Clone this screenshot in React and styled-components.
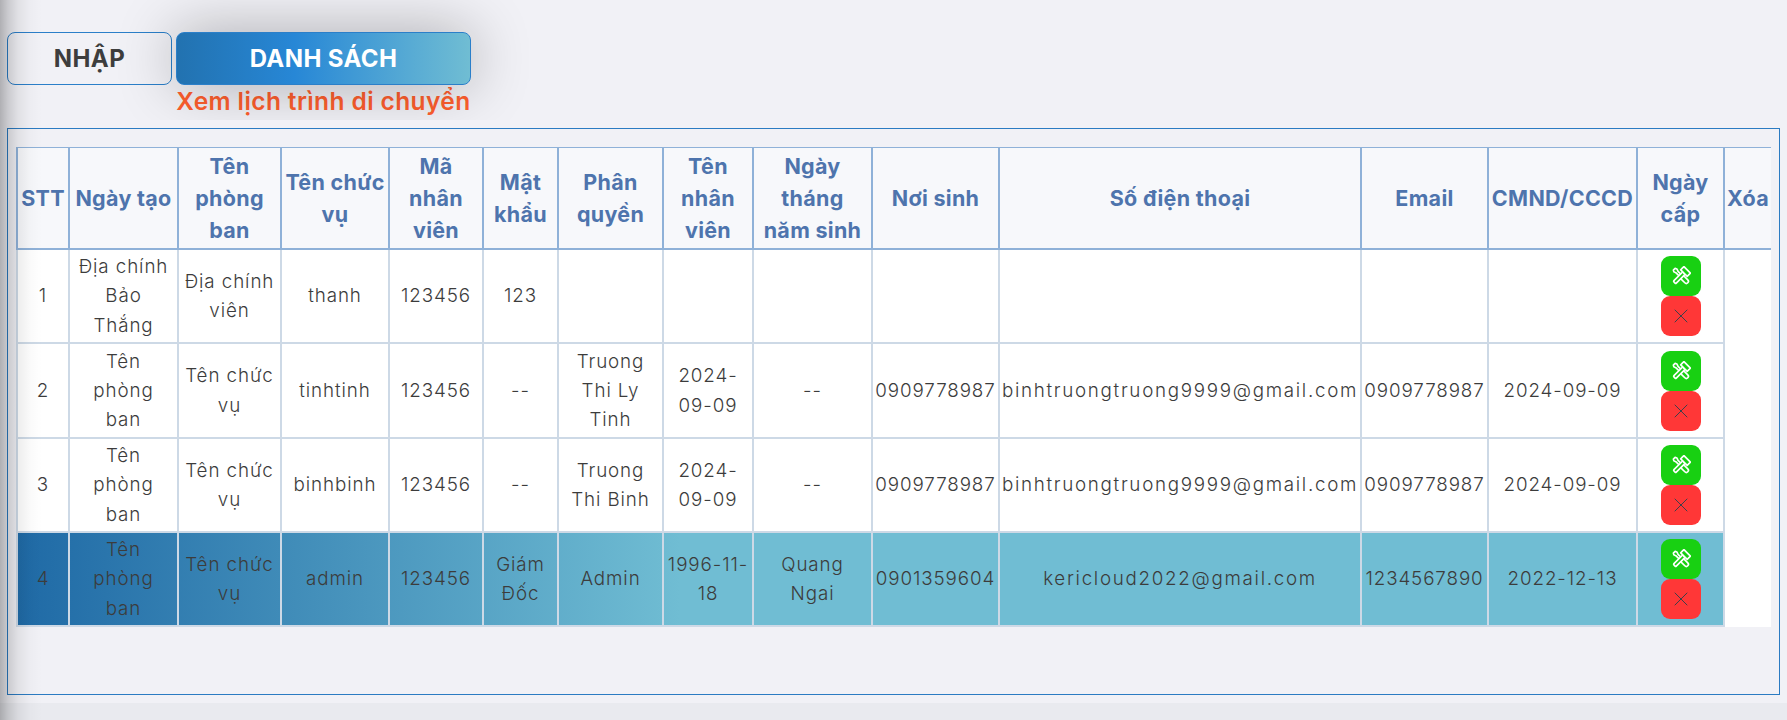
import React from "react";
import styled, { createGlobalStyle } from "styled-components";
import { X } from "lucide-react";

const Global = createGlobalStyle`
  html, body { margin: 0; padding: 0; background: #f1f1f6; }
  body { font-family: Inter, "Noto Sans", "Liberation Sans", sans-serif; overflow: hidden; }
`;

const Page = styled.div`
  position: relative;
  width: 1787px;
  height: 720px;
  overflow: hidden;
  display: flex;
  flex-direction: column;
`;

const EdgeShadow = styled.div`
  position: absolute;
  left: 0;
  top: 0;
  bottom: 0;
  width: 42px;
  pointer-events: none;
  background: linear-gradient(90deg, rgba(0,0,0,.27) 0, rgba(0,0,0,.16) 8px, rgba(0,0,0,.07) 18px, rgba(0,0,0,.02) 30px, rgba(0,0,0,0) 42px);
`;

const TabArea = styled.div`
  height: 88px;
  padding: 32px 0 0 7px;
  overflow: hidden;
  display: grid;
  grid-template-columns: 165px 295px;
  grid-template-rows: 53px 33px;
  column-gap: 4px;
  align-content: start;
`;

const Tab = styled.button`
  box-sizing: border-box;
  height: 53px;
  border: 1px solid #2b7fc9;
  border-radius: 8px;
  font: 700 24px/1 Inter, sans-serif;
  letter-spacing: .4px;
  padding: 0;
  position: relative;
  color: ${(p) => (p.$active ? "#ffffff" : "#3d3d3d")};
  background: ${(p) => (p.$active ? "linear-gradient(90deg, #2272b0 0%, #2787d6 40%, #70bdd3 100%)" : "transparent")};
  box-shadow: ${(p) => (p.$active ? "0 0 60px rgba(0,0,0,.3)" : "none")};
`;

const Hint = styled.div`
  grid-column: 2;
  color: #ff5f2e;
  font: 600 24.5px/33px Inter, sans-serif;
  letter-spacing: .4px;
  text-align: center;
  white-space: nowrap;
`;

const Panel = styled.div`
  box-sizing: border-box;
  margin: 8px 0 0 7px;
  width: 1773px;
  height: 567px;
  border: 1px solid #2b7bc2;
  padding: 18px 0 0 8px;
`;

const Table = styled.table`
  table-layout: fixed;
  width: 1754px;
  border-collapse: collapse;
  background: #ffffff;
`;

const Th = styled.th`
  height: 101px;
  padding: 0;
  box-sizing: border-box;
  background: #f7f8fb;
  border: 2px solid #8fb1d8;
  border-top-width: 1px;
  &:last-child { border-right: 0; }
  color: #4e74ad;
  font: 700 21.5px/32px Inter, sans-serif;
  letter-spacing: .3px;
  text-align: center;
  vertical-align: middle;
  white-space: pre-line;
`;

const Row = styled.tr`
  height: ${(p) => p.$h}px;
  background: ${(p) => (p.$active ? "linear-gradient(90deg, #1f6aa6 0, #70bdd3 663px)" : "transparent")};
`;

const Td = styled.td`
  padding: 1px 0 0;
  box-sizing: border-box;
  border: 2px solid #cdd9e6;
  color: #3c3c3c;
  font: 300 18.8px/29.3px Inter, sans-serif;
  letter-spacing: ${(p) => (p.$mail ? "1.7px" : ".9px")};
  text-align: center;
  vertical-align: middle;
  white-space: pre-line;
`;

const Spacer = styled.td`
  padding: 0;
  background: #ffffff;
`;

const Actions = styled.div`
  display: flex;
  flex-direction: column;
  align-items: center;
`;

const IconButton = styled.button`
  width: 40px;
  height: 40px;
  padding: 0;
  border: 0;
  border-radius: 9px;
  display: flex;
  align-items: center;
  justify-content: center;
  background: ${(p) => (p.$kind === "edit" ? "#18d012" : "#ff3737")};
  color: ${(p) => (p.$kind === "edit" ? "#ffffff" : "#3f3f4a")};
`;

const Footer = styled.div`
  margin-top: 8px;
  flex: 1;
  background: #e9eaef;
`;

const ToolsIcon = () => (
  <svg width="20" height="20" viewBox="0 0 24 24" fill="none" stroke="currentColor" strokeWidth="2" strokeLinejoin="round">
    <g transform="rotate(-45 12 12)">
      <rect x="9.5" y="13.5" width="5" height="10" rx="2.5" />
      <path d="M10.5 13.5V5.5L9.5 2.5L10.5 .5H13.5L14.5 2.5L13.5 5.5V13.5" />
    </g>
    <g transform="rotate(45 12 12)">
      <rect x="10" y="7" width="4" height="16" rx="1" fill="#18d012" />
      <path d="M6.5 1.5H17.5V7H6.5C6.5 5 6.5 3.5 6.5 1.5Z" fill="#18d012" />
    </g>
  </svg>
);

const widths = [52, 109, 103, 108, 94, 75, 105, 90, 119, 127, 362, 127, 149, 87, 47];

const headers = [
  "STT", "Ngày tạo", "Tên\nphòng\nban", "Tên chức\nvụ", "Mã\nnhân\nviên", "Mật\nkhẩu", "Phân\nquyền",
  "Tên\nnhân\nviên", "Ngày\ntháng\nnăm sinh", "Nơi sinh", "Số điện thoại", "Email", "CMND/CCCD", "Ngày\ncấp", "Xóa",
];

const rows = [
  { h: 94, cells: ["1", "Địa chính\nBảo\nThắng", "Địa chính\nviên", "thanh", "123456", "123", "", "", "", "", "", "", ""] },
  { h: 95, cells: ["2", "Tên\nphòng\nban", "Tên chức\nvụ", "tinhtinh", "123456", "--", "Truong\nThi Ly\nTinh", "2024-\n09-09", "--", "0909778987", "binhtruongtruong9999@gmail.com", "0909778987", "2024-09-09"] },
  { h: 94, cells: ["3", "Tên\nphòng\nban", "Tên chức\nvụ", "binhbinh", "123456", "--", "Truong\nThi Binh", "2024-\n09-09", "--", "0909778987", "binhtruongtruong9999@gmail.com", "0909778987", "2024-09-09"] },
  { h: 94, active: true, cells: ["4", "Tên\nphòng\nban", "Tên chức\nvụ", "admin", "123456", "Giám\nĐốc", "Admin", "1996-11-\n18", "Quang\nNgai", "0901359604", "kericloud2022@gmail.com", "1234567890", "2022-12-13"] },
];

export default function App() {
  return (
    <Page>
      <Global />
      <TabArea>
        <Tab>NHẬP</Tab>
        <Tab $active>DANH SÁCH</Tab>
        <Hint>Xem lịch trình di chuyển</Hint>
      </TabArea>
      <Panel>
        <Table>
          <colgroup>
            {widths.map((w, i) => (
              <col key={i} width={w} />
            ))}
          </colgroup>
          <thead>
            <tr>
              {headers.map((h) => (
                <Th key={h}>{h}</Th>
              ))}
            </tr>
          </thead>
          <tbody>
            {rows.map((r) => (
              <Row key={r.cells[0]} $h={r.h} $active={r.active}>
                {r.cells.map((c, i) => (
                  <Td key={i} $mail={c.includes("@")}>{c}</Td>
                ))}
                <Td>
                  <Actions>
                    <IconButton $kind="edit" aria-label="Sửa">
                      <ToolsIcon />
                    </IconButton>
                    <IconButton $kind="delete" aria-label="Xóa">
                      <X size={24} strokeWidth={1} />
                    </IconButton>
                  </Actions>
                </Td>
                <Spacer />
              </Row>
            ))}
          </tbody>
        </Table>
      </Panel>
      <Footer />
      <EdgeShadow />
    </Page>
  );
}
